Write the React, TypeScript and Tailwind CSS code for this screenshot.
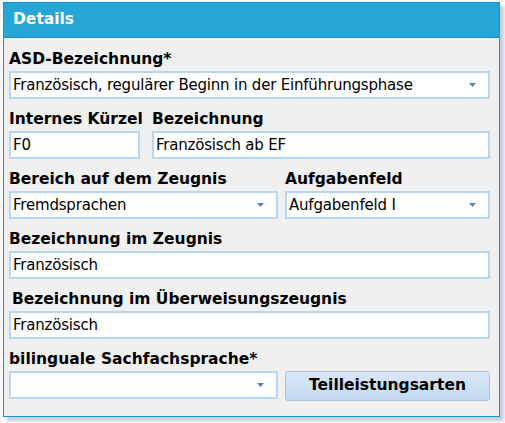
const font = { fontFamily: '"DejaVu Sans", Verdana, sans-serif' };

const Label = ({ text, className = "" }: { text: string; className?: string }) => (
  <div className={`h-[20px] text-[15.5px] leading-[20px] font-bold text-black whitespace-nowrap ${className}`}>
    {text}
  </div>
);

const Arrow = () => (
  <svg width="7" height="4" viewBox="0 0 7 4" className="shrink-0">
    <path d="M0 0H7L3.5 4Z" fill="#5b7fb6" />
  </svg>
);

const Field = ({ value, select = false }: { value: string; select?: boolean }) => (
  <div className="mt-[2px] flex h-[28px] items-center border-2 border-[#b7d6ef] bg-white pl-[2px] pr-[12px]">
    <span className="flex-1 truncate text-[15px] tracking-[-0.2px] text-black">{value}</span>
    {select && <Arrow />}
  </div>
);

export default function App() {
  return (
    <div className="h-[423px] w-[505px] bg-[#f8fafd] pl-[3px] pt-[2px]" style={font}>
      <div className="flex h-[415px] w-[497px] flex-col border border-[#1596cb] bg-[#f0f0f0] shadow-[4px_4px_3px_#c6cfdd]">
        <div className="flex h-[35px] items-center border-b border-[#1b8fc0] bg-[#25a6d6] pl-[9px] text-[15.5px] font-bold text-white">
          Details
        </div>
        <div className="flex flex-col pl-[5px] pr-[9px] pt-[11px]">
          <div className="pb-[10px]">
            <Label text="ASD-Bezeichnung*" />
            <Field value="Französisch, regulärer Beginn in der Einführungsphase" select />
          </div>
          <div className="flex gap-[12px] pb-[10px]">
            <div className="w-[131px]">
              <Label text="Internes Kürzel" />
              <Field value="F0" />
            </div>
            <div className="flex-1">
              <Label text="Bezeichnung" />
              <Field value="Französisch ab EF" />
            </div>
          </div>
          <div className="flex gap-[7px] pb-[10px]">
            <div className="w-[269px]">
              <Label text="Bereich auf dem Zeugnis" />
              <Field value="Fremdsprachen" select />
            </div>
            <div className="flex-1">
              <Label text="Aufgabenfeld" />
              <Field value="Aufgabenfeld I" select />
            </div>
          </div>
          <div className="pb-[10px]">
            <Label text="Bezeichnung im Zeugnis" />
            <Field value="Französisch" />
          </div>
          <div className="pb-[10px]">
            <Label text="Bezeichnung im Überweisungszeugnis" className="pl-[3px]" />
            <Field value="Französisch" />
          </div>
          <div>
            <Label text="bilinguale Sachfachsprache*" />
            <div className="flex gap-[7px]">
              <div className="w-[269px]">
                <Field value="" select />
              </div>
              <button className="mt-[2px] h-[30px] flex-1 rounded-[3px] border border-[#a8c3e3] bg-gradient-to-b from-[#dae8f8] to-[#c3d8f0] text-[15.5px] font-bold text-black">
                Teilleistungsarten
              </button>
            </div>
          </div>
        </div>
      </div>
    </div>
  );
}
